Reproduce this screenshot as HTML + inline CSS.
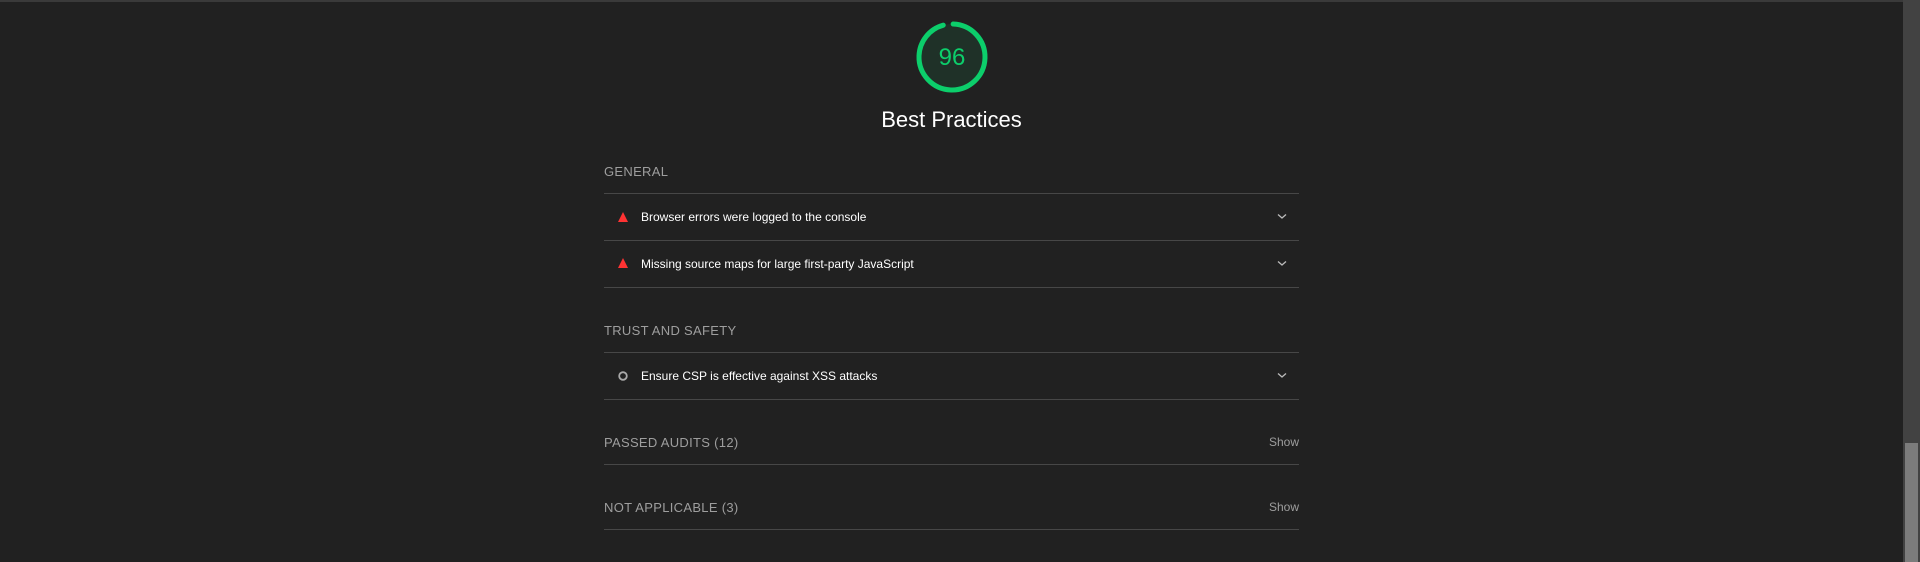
<!DOCTYPE html>
<html><head><style>
html,body{margin:0;padding:0;width:1920px;height:562px;background:#212121;overflow:hidden;font-family:"Liberation Sans",sans-serif;}
.top{position:absolute;left:0;top:0;width:1903px;height:2px;background:#3a3a3a;}
.sb{position:absolute;left:1903px;top:0;width:17px;height:562px;background:#424242;}
.thumb{position:absolute;left:1905px;top:443px;width:13px;height:119px;background:#7c7c7c;}
.line{position:absolute;left:604px;width:695px;height:1px;background:#474747;}
.t{position:absolute;white-space:nowrap;line-height:1;}
.hdr{color:#9e9e9e;font-size:13px;letter-spacing:0.3px;left:604px;}
.row{color:#fff;font-size:12px;left:641px;top:0;}
.show{color:#9e9e9e;font-size:12px;right:621px;}
.chev{position:absolute;left:1277px;}
</style></head><body>
<div class="top"></div><div class="sb"></div><div class="thumb"></div>
<svg style="position:absolute;left:914px;top:19px" width="76" height="76" viewBox="0 0 76 76">
<circle cx="38" cy="38" r="33" fill="#1f3128"/>
<circle cx="38" cy="38" r="33" fill="none" stroke="#0cce6b" stroke-width="5" stroke-linecap="round" stroke-dasharray="197 400" transform="rotate(-88 38 38)"/>
<text x="38" y="46" text-anchor="middle" font-family="Liberation Sans,sans-serif" font-size="24" fill="#0cce6b">96</text>
</svg>
<div class="t" style="left:0;width:1903px;text-align:center;top:109px;font-size:22px;color:#fff">Best Practices</div>

<div class="t hdr" style="top:165px">GENERAL</div>
<div class="line" style="top:193px"></div>
<svg style="position:absolute;left:618px;top:212px" width="10" height="10"><polygon points="5,0 10,10 0,10" fill="#ff3333"/></svg>
<div class="t row" style="top:211px">Browser errors were logged to the console</div>
<svg class="chev" style="top:213px" width="10" height="7"><path d="M1 1.5 L5 5 L9 1.5" stroke="#bbb" stroke-width="1.3" fill="none"/></svg>
<div class="line" style="top:240px"></div>
<svg style="position:absolute;left:618px;top:258px" width="10" height="10"><polygon points="5,0 10,10 0,10" fill="#ff3333"/></svg>
<div class="t row" style="top:258px">Missing source maps for large first-party JavaScript</div>
<svg class="chev" style="top:260px" width="10" height="7"><path d="M1 1.5 L5 5 L9 1.5" stroke="#bbb" stroke-width="1.3" fill="none"/></svg>
<div class="line" style="top:287px"></div>

<div class="t hdr" style="top:324px">TRUST AND SAFETY</div>
<div class="line" style="top:352px"></div>
<svg style="position:absolute;left:618px;top:371px" width="10" height="10"><circle cx="5" cy="5" r="3.8" stroke="#aaa" stroke-width="1.8" fill="none"/></svg>
<div class="t row" style="top:370px">Ensure CSP is effective against XSS attacks</div>
<svg class="chev" style="top:372px" width="10" height="7"><path d="M1 1.5 L5 5 L9 1.5" stroke="#bbb" stroke-width="1.3" fill="none"/></svg>
<div class="line" style="top:399px"></div>

<div class="t hdr" style="top:436px">PASSED AUDITS (12)</div>
<div class="t show" style="top:436px">Show</div>
<div class="line" style="top:464px"></div>
<div class="t hdr" style="top:501px">NOT APPLICABLE (3)</div>
<div class="t show" style="top:501px">Show</div>
<div class="line" style="top:529px"></div>
</body></html>
